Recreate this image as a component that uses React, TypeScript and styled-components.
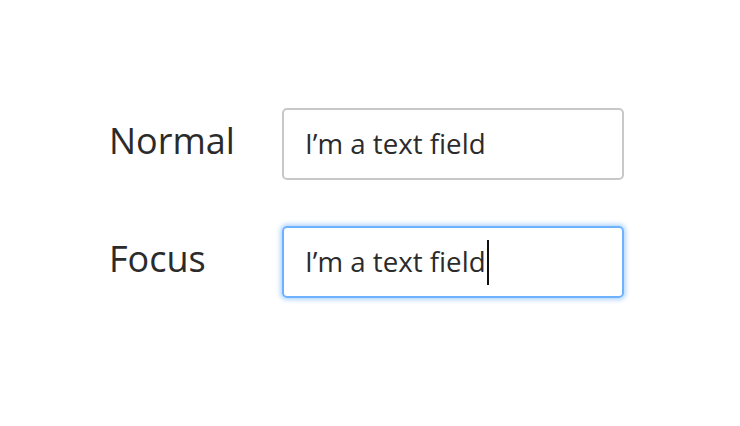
import React from "react";
import styled, { createGlobalStyle } from "styled-components";

const Global = createGlobalStyle`
  html, body { margin: 0; padding: 0; background: #ffffff; }
  body { font-family: "Open Sans", "Noto Sans", sans-serif; }
`;

const Page = styled.div`
  width: 740px;
  height: 426px;
  box-sizing: border-box;
  padding: 108px 0 0 109px;
`;

const Form = styled.div`
  display: grid;
  grid-template-columns: 173px 342px;
  row-gap: 46px;
  align-items: center;
`;

const Label = styled.div`
  font-size: 36px;
  color: #2b2b2b;
  line-height: 1;
  margin-top: -7px;
`;

const Field = styled.div<{ $focus?: boolean }>`
  box-sizing: border-box;
  height: 72px;
  border-radius: 5px;
  border: 2px solid ${(p) => (p.$focus ? "#6cb2ff" : "#c8c8c8")};
  box-shadow: ${(p) => (p.$focus ? "0 0 4px 2px rgba(108,178,255,0.5)" : "none")};
  display: flex;
  align-items: center;
  padding: 0 0 2px 21px;
  font-size: 27.7px;
  color: #2b2b2b;
`;

const Caret = styled.span`
  display: inline-block;
  width: 2px;
  height: 45px;
  background: #111;
  margin-left: 1px;
  margin-top: 3px;
`;

export default function App() {
  return (
    <Page>
      <Global />
      <Form>
        <Label>Normal</Label>
        <Field>I’m a text field</Field>
        <Label>Focus</Label>
        <Field $focus>
          I’m a text field
          <Caret />
        </Field>
      </Form>
    </Page>
  );
}
